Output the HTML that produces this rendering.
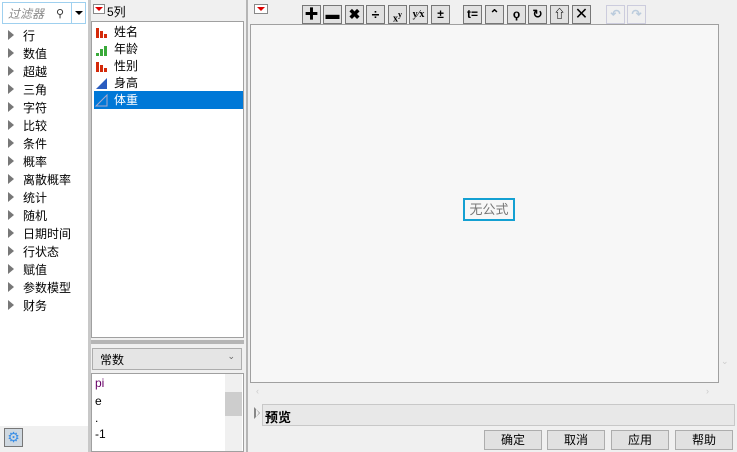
<!DOCTYPE html>
<html><head><meta charset="utf-8"><style>
*{box-sizing:border-box;margin:0;padding:0}
body{width:737px;height:452px;background:#f0f0f0;font-family:"Liberation Sans","Noto Sans CJK SC",sans-serif;font-size:12px;position:relative;overflow:hidden;color:#000}
.a{position:absolute;white-space:nowrap}
.tri{position:absolute;left:8px;width:0;height:0;border-top:5px solid transparent;border-bottom:5px solid transparent;border-left:6px solid #777}
.tb{position:absolute;top:5px;width:19px;height:19px;background:#e1e1e1;border:1px solid #777;font-weight:bold;text-align:center;line-height:17px;font-size:14px;white-space:nowrap}
.btn{position:absolute;top:430px;width:58px;height:20px;background:#e1e1e1;border:1px solid #adadad;text-align:center;line-height:18px}
.row{position:absolute;left:2px;width:149px;height:18px;line-height:18px;padding-left:20px}
</style></head><body>
<!-- left panel -->
<div class="a" style="left:0;top:0;width:88px;height:452px;background:#fff"></div>
<div class="a" style="left:2px;top:2px;width:70px;height:22px;border:1px solid #9fd0ef;color:#888;font-style:italic;padding:2px 0 0 5px">过滤器</div>
<div class="a" style="left:56px;top:7px;font-size:11px;color:#333">⚲</div>
<div class="a" style="left:72px;top:2px;width:14px;height:22px;border:1px solid #9fd0ef;border-left:none"></div>
<div class="a" style="left:75px;top:11px;border-left:4px solid transparent;border-right:4px solid transparent;border-top:4px solid #000"></div>
<div class="a" style="left:0;top:27px;width:88px;height:300px">
<div class="tri" style="top:3px"></div><div class="a" style="left:23px;top:0">行</div>
<div class="tri" style="top:21px"></div><div class="a" style="left:23px;top:18px">数值</div>
<div class="tri" style="top:39px"></div><div class="a" style="left:23px;top:36px">超越</div>
<div class="tri" style="top:57px"></div><div class="a" style="left:23px;top:54px">三角</div>
<div class="tri" style="top:75px"></div><div class="a" style="left:23px;top:72px">字符</div>
<div class="tri" style="top:93px"></div><div class="a" style="left:23px;top:90px">比较</div>
<div class="tri" style="top:111px"></div><div class="a" style="left:23px;top:108px">条件</div>
<div class="tri" style="top:129px"></div><div class="a" style="left:23px;top:126px">概率</div>
<div class="tri" style="top:147px"></div><div class="a" style="left:23px;top:144px">离散概率</div>
<div class="tri" style="top:165px"></div><div class="a" style="left:23px;top:162px">统计</div>
<div class="tri" style="top:183px"></div><div class="a" style="left:23px;top:180px">随机</div>
<div class="tri" style="top:201px"></div><div class="a" style="left:23px;top:198px">日期时间</div>
<div class="tri" style="top:219px"></div><div class="a" style="left:23px;top:216px">行状态</div>
<div class="tri" style="top:237px"></div><div class="a" style="left:23px;top:234px">赋值</div>
<div class="tri" style="top:255px"></div><div class="a" style="left:23px;top:252px">参数模型</div>
<div class="tri" style="top:273px"></div><div class="a" style="left:23px;top:270px">财务</div>
</div>
<div class="a" style="left:0;top:426px;width:88px;height:26px;background:#f0f0f0"></div>
<div class="a" style="left:4px;top:428px;width:19px;height:19px;border:1px solid #777;color:#3a8ee6;text-align:center;line-height:17px;font-size:14px;background:#cfd8e0">⚙</div>
<div class="a" style="left:88px;top:0;width:3px;height:452px;background:#c8c8c8"></div>
<!-- middle -->
<div class="a" style="left:93px;top:4px;width:12px;height:10px;border:1px solid #888;background:#fff"></div>
<div class="a" style="left:95px;top:7px;border-left:4px solid transparent;border-right:4px solid transparent;border-top:4px solid #d00"></div>
<div class="a" style="left:107px;top:3px">5列</div>
<div class="a" style="left:91px;top:21px;width:153px;height:317px;background:#fff;border:1px solid #a0a0a0">
<div class="row" style="top:1px">姓名</div>
<div class="row" style="top:18px">年龄</div>
<div class="row" style="top:35px">性别</div>
<div class="row" style="top:52px">身高</div>
<div class="row" style="top:69px;background:#0078d7;color:#fff">体重</div>
<svg class="a" style="left:3px;top:3px" width="14" height="90">
<g fill="#d42a0a"><rect x="1" y="3" width="3" height="10"/><rect x="5" y="6" width="3" height="7"/><rect x="9" y="9" width="3" height="4"/></g>
<g fill="#3aaa3a"><rect x="1" y="28" width="3" height="3"/><rect x="5" y="24" width="3" height="7"/><rect x="9" y="21" width="3" height="10"/></g>
<g fill="#d42a0a"><rect x="1" y="37" width="3" height="10"/><rect x="5" y="40" width="3" height="7"/><rect x="9" y="43" width="3" height="4"/></g>
<polygon points="1,64 12,53 12,64" fill="#2a5cc0"/>
<polygon points="1,81 12,70 12,81" fill="none" stroke="#aac" stroke-width="1"/>
</svg>
</div>
<div class="a" style="left:91px;top:340px;width:153px;height:4px;background:#b5b5b5"></div>
<div class="a" style="left:92px;top:348px;width:150px;height:22px;background:#e5e5e5;border:1px solid #adadad;padding:2px 0 0 7px">常数<span style="position:absolute;right:6px;top:2px;font-size:9px;color:#666">⌄</span></div>
<div class="a" style="left:91px;top:373px;width:153px;height:79px;background:#fff;border:1px solid #a0a0a0">
<div class="a" style="left:3px;top:2px;color:#606">pi</div>
<div class="a" style="left:3px;top:20px">e</div>
<div class="a" style="left:3px;top:37px">.</div>
<div class="a" style="left:3px;top:53px">-1</div>
<div class="a" style="left:133px;top:0;width:17px;height:77px;background:#f0f0f0"></div>
<div class="a" style="left:133px;top:18px;width:17px;height:24px;background:#cdcdcd"></div>
</div>
<div class="a" style="left:244px;top:0;width:2px;height:452px;background:#f0f0f0"></div>
<div class="a" style="left:246px;top:0;width:2px;height:452px;background:#b5b5b5"></div>
<!-- toolbar -->
<div class="a" style="left:254px;top:4px;width:14px;height:10px;border:1px solid #888;background:#fff"></div>
<div class="a" style="left:257px;top:7px;border-left:4px solid transparent;border-right:4px solid transparent;border-top:4px solid #d00"></div>
<div class="tb" style="left:302px">✚</div>
<div class="tb" style="left:323px">▬</div>
<div class="tb" style="left:345px">✖</div>
<div class="tb" style="left:366px">÷</div>
<div class="tb" style="left:388px;font-size:10px;font-family:'Liberation Serif',serif">x<sup style="font-size:8px">y</sup></div>
<div class="tb" style="left:409px;font-size:10px;font-family:'Liberation Serif',serif">y⁄x</div>
<div class="tb" style="left:431px;font-size:12px">±</div>
<div class="tb" style="left:463px;font-size:12px">t=</div>
<div class="tb" style="left:485px;font-size:12px">⌃</div>
<div class="tb" style="left:507px;font-size:12px">ϙ</div>
<div class="tb" style="left:528px;font-size:12px">↻</div>
<div class="tb" style="left:550px;font-size:12px">⇧</div>
<div class="tb" style="left:572px;font-weight:normal;font-size:16px">✕</div>
<div class="tb" style="left:606px;background:#f0f0f0;border-color:#ccd;color:#bcd;font-size:12px">↶</div>
<div class="tb" style="left:627px;background:#f0f0f0;border-color:#ccd;color:#bcd;font-size:12px">↷</div>
<!-- editor -->
<div class="a" style="left:250px;top:24px;width:469px;height:359px;background:#f7f7f7;border:1px solid #a0a0a0"></div>
<div class="a" style="left:463px;top:198px;width:52px;height:23px;border:2px solid #14a0d2;color:#777;font-size:13px;text-align:center;line-height:19px">无公式</div>
<div class="a" style="left:721px;top:356px;font-size:9px;color:#ccc">⌄</div>
<div class="a" style="left:256px;top:386px;font-size:9px;color:#ccc">‹</div>
<div class="a" style="left:706px;top:386px;font-size:9px;color:#ccc">›</div>
<div class="a" style="left:254px;top:407px;border-top:6px solid transparent;border-bottom:6px solid transparent;border-left:6px solid #888"></div>
<div class="a" style="left:256px;top:409px;border-top:4px solid transparent;border-bottom:4px solid transparent;border-left:3px solid #f0f0f0"></div>
<div class="a" style="left:262px;top:404px;width:473px;height:22px;background:#e8e8e8;border:1px solid #c8c8c8;font-weight:bold;font-size:13px;padding:2px 0 0 2px">预览</div>
<div class="btn" style="left:484px">确定</div>
<div class="btn" style="left:547px">取消</div>
<div class="btn" style="left:611px">应用</div>
<div class="btn" style="left:675px">帮助</div>
</body></html>
